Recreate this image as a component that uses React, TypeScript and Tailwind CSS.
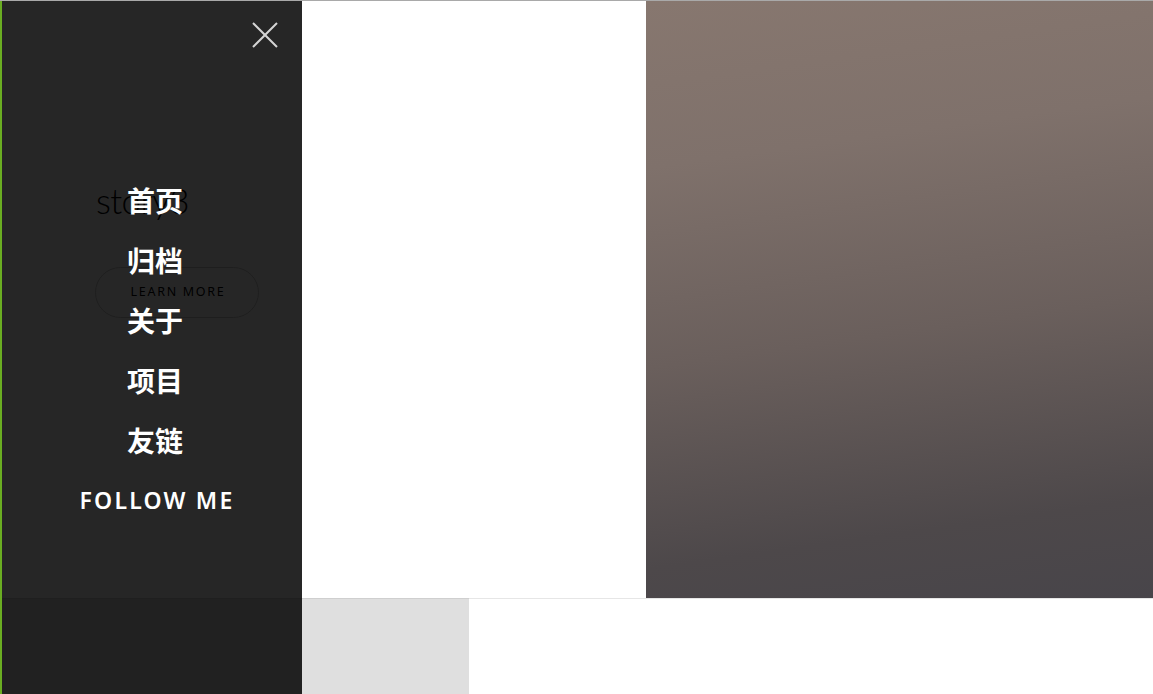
const menu = ['首页', '归档', '关于', '项目', '友链'];

function CloseIcon() {
  return (
    <svg width="26" height="26" viewBox="0 0 26 26" className="text-[#d4d4d4]">
      <path d="M1 1L25 25M25 1L1 25" stroke="currentColor" strokeWidth="2" />
    </svg>
  );
}

export default function App() {
  return (
    <div className="relative h-[694px] w-[1153px] overflow-hidden border-t border-[#a9a9a9] bg-white font-['Lato',sans-serif]">
      {/* page underneath */}
      <div className="flex h-[597px]">
        <section className="w-[646px] pl-[96px] pt-[175px]">
          <h1 className="text-[35px] font-light leading-[48px] tracking-[-0.6px] text-black">story3</h1>
          <button
            type="button"
            className="-ml-px mt-[43px] flex h-[51px] w-[164px] items-center justify-center rounded-full border border-[#c9c9c9] pl-[2px] font-['Noto_Sans',sans-serif] text-[12.5px] tracking-[1.7px] text-black"
          >
            LEARN MORE
          </button>
        </section>
        <div className="flex-1 bg-[linear-gradient(172deg,#87776f_0%,#7f716b_25%,#6a5f5c_55%,#4d484a_85%,#48454a_100%)]" />
      </div>
      <div className="flex h-[96px] border-t border-[#e6e6e6]">
        <div className="-mt-px h-[97px] w-[469px] border-t border-[#cfcfcf] bg-[#dfdfdf]" />
      </div>

      {/* slide-in menu */}
      <nav className="absolute top-0 bottom-0 left-0 w-[302px] border-l-2 border-[#6aad22] bg-black/85">
        <button type="button" className="absolute top-[21px] left-[250px] p-0">
          <CloseIcon />
        </button>
        <ul className="flex flex-col pt-[169px] pl-[6px]">
          {menu.map((m) => (
            <li
              key={m}
              className="flex h-[60px] items-center justify-center font-['Noto_Sans_CJK_SC',sans-serif] text-[28px] font-bold text-white"
            >
              {m}
            </li>
          ))}
          <li className="flex h-[60px] items-center justify-center pl-[4px] font-['Noto_Sans',sans-serif] text-[23px] font-semibold tracking-[2.2px] text-white">
            FOLLOW ME
          </li>
        </ul>
      </nav>
    </div>
  );
}
